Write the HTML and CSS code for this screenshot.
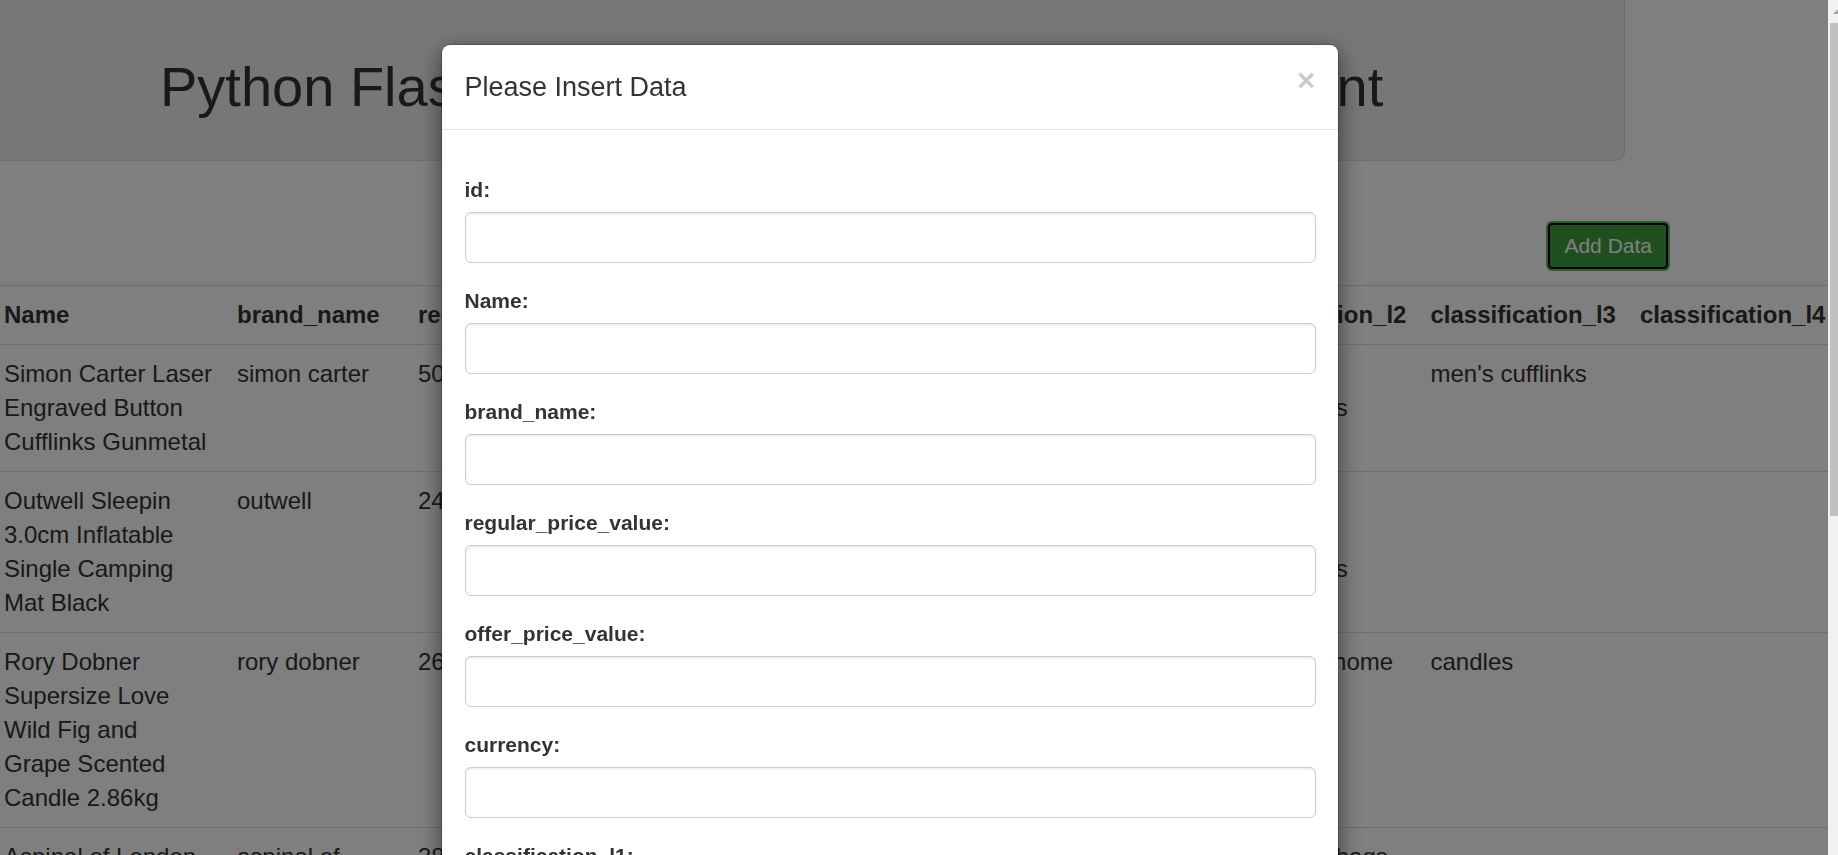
FILE: index.html
```html
<!DOCTYPE html>
<html lang="en">
<head>
<meta charset="utf-8">
<title>Python Flask Fashion Product Data Management</title>
<link rel="stylesheet" href="styles.css">
</head>
<body>
<div class="page">
  <header class="jumbotron">
    <h1 class="title">Python Flask Fashion Product Data Management</h1>
  </header>

  <div class="toolbar">
    <button class="btn-add" type="button">Add Data</button>
  </div>

  <table class="data-table">
    <thead>
      <tr>
        <th class="c-name">Name</th>
        <th class="c-brand">brand_name</th>
        <th class="c-reg">regular_price_value</th>
        <th class="c-offer">offer_price_value</th>
        <th class="c-cur">currency</th>
        <th class="c-l1">classification_l1</th>
        <th class="c-cls">classification_l2</th>
        <th class="c-cls">classification_l3</th>
        <th class="c-cls">classification_l4</th>
      </tr>
    </thead>
    <tbody>
      <tr>
        <td>Simon Carter Laser Engraved Button Cufflinks Gunmetal</td>
        <td>simon carter</td>
        <td>50</td>
        <td>35</td>
        <td>GBP</td>
        <td>men</td>
        <td>jewellery &amp; accessories</td>
        <td>men's cufflinks</td>
        <td></td>
      </tr>
      <tr>
        <td>Outwell Sleepin 3.0cm Inflatable Single Camping Mat Black</td>
        <td>outwell</td>
        <td>24</td>
        <td>18</td>
        <td>GBP</td>
        <td>sports &amp; leisure</td>
        <td>outdoor &amp; camping accessories</td>
        <td></td>
        <td></td>
      </tr>
      <tr>
        <td>Rory Dobner Supersize Love Wild Fig and Grape&nbsp;Scented Candle 2.86kg</td>
        <td>rory dobner</td>
        <td>26</td>
        <td>20</td>
        <td>GBP</td>
        <td>home &amp; garden</td>
        <td>candles &amp; home</td>
        <td>candles</td>
        <td></td>
      </tr>
      <tr>
        <td>Aspinal of London Mayfair Bag Black</td>
        <td>aspinal of london</td>
        <td>38</td>
        <td>30</td>
        <td>GBP</td>
        <td>women</td>
        <td>luggage &amp; bags</td>
        <td></td>
        <td></td>
      </tr>
    </tbody>
  </table>
</div>

<div class="backdrop"></div>

<div class="modal">
  <div class="dialog">
    <div class="modal-header">
      <h4 class="modal-title">Please Insert Data</h4>
      <button class="close" type="button" aria-label="Close">&times;</button>
    </div>
    <div class="modal-body">
      <form class="insert-form">
        <div class="field"><label class="field-label">id:</label><input class="input" type="text"></div>
        <div class="field"><label class="field-label">Name:</label><input class="input" type="text"></div>
        <div class="field"><label class="field-label">brand_name:</label><input class="input" type="text"></div>
        <div class="field"><label class="field-label">regular_price_value:</label><input class="input" type="text"></div>
        <div class="field"><label class="field-label">offer_price_value:</label><input class="input" type="text"></div>
        <div class="field"><label class="field-label">currency:</label><input class="input" type="text"></div>
        <div class="field"><label class="field-label">classification_l1:</label><input class="input" type="text"></div>
        <div class="field"><label class="field-label">classification_l2:</label><input class="input" type="text"></div>
        <div class="field"><label class="field-label">classification_l3:</label><input class="input" type="text"></div>
        <div class="field"><label class="field-label">classification_l4:</label><input class="input" type="text"></div>
        <div class="field"><button class="btn-submit" type="button">Insert Data</button></div>
      </form>
    </div>
    <div class="modal-footer">
      <button class="btn-close" type="button">Close</button>
    </div>
  </div>
</div>

<div class="scrollbar">
  <div class="sb-arrow"></div>
  <div class="sb-thumb"></div>
</div>
</body>
</html>
```

FILE: styles.css
```css
html, body {
  margin: 0;
  padding: 0;
  width: 1838px;
  height: 855px;
  overflow: hidden;
  background: #fff;
}

body {
  font-family: "Liberation Sans", Arial, sans-serif;
  color: #333;
  font-size: 24px;
  line-height: 34px;
}

.page {
  width: 1838px;
}

/* Jumbotron */
.jumbotron {
  box-sizing: border-box;
  width: 1625px;
  height: 161px;
  padding: 56px 0 0 160px;
  background: #eee;
  border-right: 1px solid #ddd;
  border-bottom: 1px solid #ddd;
  border-radius: 0 0 9px 0;
}

.title {
  margin: 0;
  font-size: 56px;
  line-height: 61.6px;
  font-weight: 400;
  white-space: nowrap;
  color: #333;
}

/* Toolbar */
.toolbar {
  width: 1670px;
  display: flex;
  justify-content: flex-end;
  padding-top: 60px;
}

.btn-add {
  box-sizing: border-box;
  height: 50px;
  padding: 8px 16px;
  font-family: "Liberation Sans", Arial, sans-serif;
  font-size: 21px;
  line-height: 30px;
  color: #fff;
  background: #3e9e3e;
  border: 2px solid #5cb85c;
  border-radius: 6px;
  box-shadow: inset 0 0 0 2px #000;
  cursor: pointer;
}

/* Table */
.data-table {
  margin-top: 14px;
  margin-left: -8px;
  width: 1845.5px;
  table-layout: fixed;
  border-collapse: collapse;
  border-spacing: 0;
}

.data-table th,
.data-table td {
  padding: 12px;
  text-align: left;
  vertical-align: top;
  line-height: 34px;
}

.data-table th {
  font-weight: 700;
  white-space: nowrap;
  border-top: 1px solid #ddd;
  border-bottom: 1px solid #ddd;
}

.data-table td {
  border-bottom: 1px solid #ddd;
}

.c-name { width: 209px; }
.c-brand { width: 157px; }
.c-reg { width: 221px; }
.c-offer { width: 191px; }
.c-cur { width: 116px; }
.c-l1 { width: 179px; }
.c-cls { width: 185.5px; }

/* Backdrop */
.backdrop {
  position: fixed;
  inset: 0;
  background: #000;
  opacity: 0.5;
  z-index: 1040;
}

/* Modal */
.modal {
  position: fixed;
  inset: 0;
  overflow: hidden;
  z-index: 1050;
}

.dialog {
  box-sizing: border-box;
  width: 898px;
  margin: 44px 0 30px 441px;
  background: #fff;
  background-clip: padding-box;
  border: 1px solid rgba(0, 0, 0, 0.2);
  border-radius: 9px;
  box-shadow: 0 7.5px 22.5px rgba(0, 0, 0, 0.5);
}

.modal-header {
  display: flex;
  justify-content: space-between;
  align-items: flex-start;
  padding: 22.5px;
  border-bottom: 1px solid #e5e5e5;
}

.modal-title {
  margin: 0;
  font-size: 27px;
  line-height: 38.6px;
  font-weight: 400;
  color: #333;
}

.close {
  margin-top: -3px;
  padding: 0;
  border: 0;
  background: transparent;
  font-family: "Liberation Sans", Arial, sans-serif;
  font-size: 31.5px;
  font-weight: 700;
  line-height: 1;
  color: #000;
  opacity: 0.2;
  cursor: pointer;
}

.modal-body {
  padding: 22.5px;
  font-size: 21px;
  line-height: 30px;
}

.insert-form {
  padding-top: 22.5px;
}

.field {
  margin-bottom: 22.5px;
  font-size: 21px;
  line-height: 30px;
}

.field-label {
  display: inline-block;
  margin-bottom: 7.5px;
  font-size: 21px;
  line-height: 30px;
  font-weight: 700;
  color: #333;
}

.input {
  display: block;
  box-sizing: border-box;
  width: 100%;
  height: 51px;
  padding: 9px 18px;
  font-family: "Liberation Sans", Arial, sans-serif;
  font-size: 21px;
  color: #555;
  background: #fff;
  border: 1px solid #ccc;
  border-radius: 6px;
  box-shadow: inset 0 1.5px 1.5px rgba(0, 0, 0, 0.075);
}

.btn-submit,
.btn-close {
  height: 51px;
  padding: 9px 18px;
  font-family: "Liberation Sans", Arial, sans-serif;
  font-size: 21px;
  line-height: 30px;
  border-radius: 6px;
}

.btn-submit {
  color: #fff;
  background: #337ab7;
  border: 1px solid #2e6da4;
}

.modal-footer {
  display: flex;
  justify-content: flex-end;
  padding: 22.5px;
  border-top: 1px solid #e5e5e5;
}

.btn-close {
  color: #333;
  background: #fff;
  border: 1px solid #ccc;
}

/* Scrollbar of the modal layer */
.scrollbar {
  position: fixed;
  top: 0;
  left: 1828px;
  width: 10px;
  height: 855px;
  background: #f1f1f1;
  overflow: hidden;
  z-index: 2000;
}

.sb-arrow {
  position: absolute;
  top: 10px;
  left: 5px;
  width: 0;
  height: 0;
  border-left: 4px solid transparent;
  border-right: 4px solid transparent;
  border-bottom: 4px solid #a3a3a3;
}

.sb-thumb {
  position: absolute;
  top: 23px;
  left: 2px;
  right: 0;
  height: 493px;
  background: #c1c1c1;
}
```
